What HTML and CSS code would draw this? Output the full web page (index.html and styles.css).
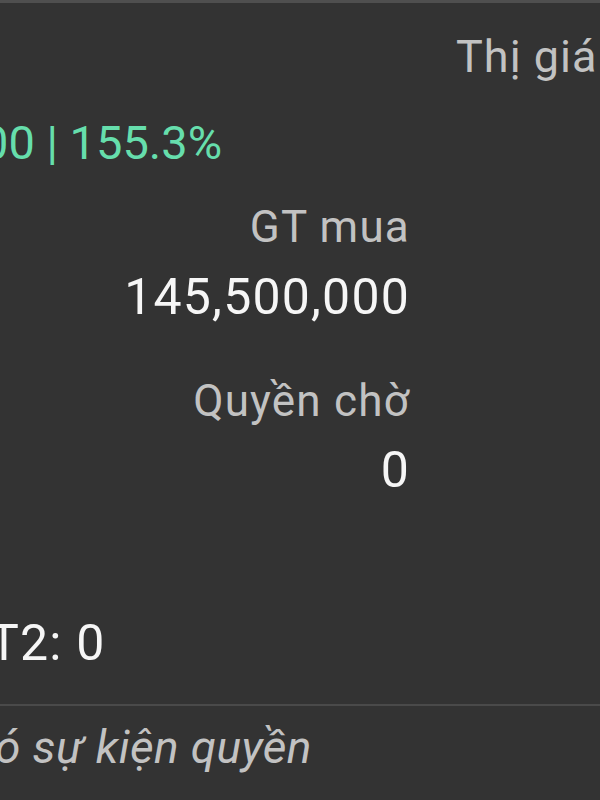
FILE: index.html
```html
<!DOCTYPE html>
<html lang="vi">
<head>
<meta charset="utf-8">
<link rel="stylesheet" href="styles.css">
</head>
<body>
<div class="card">
  <div class="summary">
    <div class="cell cell-right"><span class="label">Thị giá</span></div>
    <div class="cell cell-left pnl"><span class="gain">00 | 155.3%</span></div>
    <div class="cell cell-mid gt-label"><span class="label">GT mua</span></div>
    <div class="cell cell-mid gt-value"><span class="value">145,500,000</span></div>
    <div class="cell cell-mid q-label"><span class="label">Quyền chờ</span></div>
    <div class="cell cell-mid q-value"><span class="value">0</span></div>
    <div class="cell cell-left t2"><span class="value">T2: 0</span></div>
  </div>
  <div class="divider"></div>
  <div class="events"><span class="empty">ó sự kiện quyền</span></div>
</div>
</body>
</html>
```

FILE: styles.css
```css
html, body {
  margin: 0;
  padding: 0;
}
body {
  background: #333333;
  width: 600px;
  height: 800px;
  overflow: hidden;
  font-family: Roboto, "Noto Sans", sans-serif;
}
.card {
  border-top: 3px solid #4f4f4f;
  display: flex;
  flex-direction: column;
}
.summary {
  display: flex;
  flex-direction: column;
}
.cell {
  line-height: 1;
  white-space: nowrap;
  letter-spacing: 1.2px;
}
.cell-right {
  padding-left: 456px;
  margin-top: 31px;
  letter-spacing: 1px;
}
.cell-left {
  text-align: left;
}
.cell-mid {
  width: 410px;
  text-align: right;
}
.label {
  color: #c2c2c2;
  font-size: 44px;
}
.cell-right .label {
  font-size: 45px;
}
.value {
  color: #f6f6f6;
  font-size: 50px;
}
.gain {
  color: #66deac;
  font-size: 47px;
}
.pnl {
  margin-top: 40px;
  margin-left: -18px;
  letter-spacing: 0;
}
.gt-label {
  margin-top: 39px;
}
.gt-value {
  margin-top: 23px;
}
.q-label {
  margin-top: 57px;
}
.q-value {
  margin-top: 22px;
}
.t2 {
  margin-top: 123px;
  margin-left: -11px;
}
.divider {
  margin-top: 36px;
  height: 2px;
  background: #4a4a4a;
}
.events {
  margin-top: 18px;
  line-height: 1;
  white-space: nowrap;
  margin-left: -5px;
  letter-spacing: 0.4px;
}
.empty {
  color: #c2c2c2;
  font-size: 46px;
  font-style: italic;
}
```
